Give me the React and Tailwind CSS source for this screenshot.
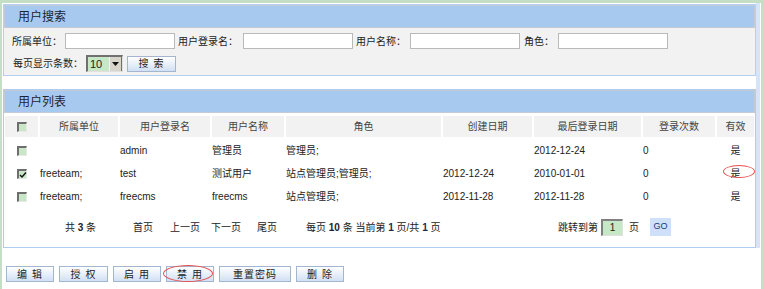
import React from 'react'

const font = { fontFamily: '"Liberation Sans", "Noto Sans CJK SC", sans-serif' }

function Checkbox({ checked }) {
  return (
    <span className="inline-block w-[10px] h-[10px] border-t-[2px] border-l-[2px] border-t-[#6e6e6e] border-l-[#6e6e6e] border-b border-r border-b-[#e8e8e8] border-r-[#e8e8e8] bg-[#c9e6c9] relative">
      {checked && (
        <svg viewBox="0 0 8 8" className="absolute left-0 top-0 w-[8px] h-[8px]">
          <path d="M1 4 L3 6 L7 1.5" fill="none" stroke="#111" strokeWidth="1.4" />
        </svg>
      )}
    </span>
  )
}

function Btn({ children, w = 'w-[48px]' }) {
  return (
    <div className={`${w} h-[16px] border border-[#a3b6d0] bg-gradient-to-b from-white to-[#d2e0f4] flex items-center justify-center text-[10px] text-[#222] tracking-[1px]`}>
      {children}
    </div>
  )
}

function PanelHeader({ title }) {
  return (
    <div className="h-[23px] border border-[#c3ccd6] bg-[#a8c9ef] flex items-center pl-[13px] text-[12px] text-[#1c2430]">
      {title}
    </div>
  )
}

const cols = 'grid grid-cols-[33px_78px_90px_72px_155px_89px_107px_72px_37px] gap-x-[2px] px-[1px]'

const rows = [
  { checked: false, unit: '', login: 'admin', name: '管理员', role: '管理员;', created: '', last: '2012-12-24', count: '0' },
  { checked: true, unit: 'freeteam;', login: 'test', name: '测试用户', role: '站点管理员;管理员;', created: '2012-12-24', last: '2010-01-01', count: '0', mark: true },
  { checked: false, unit: 'freeteam;', login: 'freecms', name: 'freecms', role: '站点管理员;', created: '2012-11-28', last: '2012-11-28', count: '0' },
]

const Input = () => <div className="w-[110px] h-[16px] border border-[#b9b9b9] bg-white" />

export default function App() {
  return (
    <div style={font} className="w-[763px] h-[289px] bg-white flex flex-col overflow-hidden text-[10px] text-[#222]">
      <div className="h-[3px] bg-[#c4dfc6] shrink-0" />
      <div className="flex flex-1">
        <div className="w-[2px] bg-[#c4dfc6]" />
        <div className="w-[759px] flex flex-col">
          <div className="flex">
            <div className="w-[754px] pl-[1px] pt-[1px]">
              {/* search panel */}
              <div className="border border-[#b3cff1] bg-[#f2f2f2]">
                <PanelHeader title="用户搜索" />
                <div className="pt-[5px] pb-[3px] pl-[8px]">
                  <div className="flex items-center h-[16px]">
                    <span className="w-[53px]">所属单位：</span>
                    <Input />
                    <span className="w-[68px] pl-[3px]">用户登录名：</span>
                    <Input />
                    <span className="w-[57px] pl-[3px]">用户名称：</span>
                    <Input />
                    <span className="w-[38px] pl-[4px]">角色：</span>
                    <Input />
                  </div>
                  <div className="flex items-center h-[17px] mt-[6px]">
                    <span className="w-[74px] pl-[1px]">每页显示条数：</span>
                    <div className="w-[37px] h-[17px] border-t-[2px] border-l-[2px] border-t-[#707070] border-l-[#707070] border-b border-r border-b-[#e0e0e0] border-r-[#e0e0e0] flex">
                      <div className="flex-1 bg-[#c6e8c6] flex items-center pl-[2px] text-[11px]">10</div>
                      <div className="w-[13px] bg-[#d8d4cc] border-l border-[#f4f4f4] border-r border-r-[#707070] flex items-center justify-center">
                        <svg viewBox="0 0 7 4" className="w-[7px] h-[4px]"><path d="M0 0 H7 L3.5 4 Z" fill="#111" /></svg>
                      </div>
                    </div>
                    <div className="ml-[4px]"><Btn w="w-[49px]">搜 索</Btn></div>
                  </div>
                </div>
              </div>

              {/* list panel */}
              <div className="mt-[13px] border border-[#aecbf0] bg-white">
                <PanelHeader title="用户列表" />
                <div className={`${cols} mt-[3px] h-[21px] text-[#444]`}>
                  <div className="bg-[#f2f2f2] flex items-center justify-center"><Checkbox /></div>
                  {['所属单位', '用户登录名', '用户名称', '角色', '创建日期', '最后登录日期', '登录次数', '有效'].map((h) => (
                    <div key={h} className="bg-[#f2f2f2] flex items-center justify-center">{h}</div>
                  ))}
                </div>
                <div className="mt-[2px]">
                  {rows.map((r, i) => (
                    <div key={i} className={`${cols} h-[23px] items-center`}>
                      <div className="flex justify-center"><Checkbox checked={r.checked} /></div>
                      <div>{r.unit}</div>
                      <div>{r.login}</div>
                      <div>{r.name}</div>
                      <div>{r.role}</div>
                      <div>{r.created}</div>
                      <div>{r.last}</div>
                      <div>{r.count}</div>
                      <div className="flex justify-center relative">
                        是
                        {r.mark && <span className="absolute left-[6px] top-[-1px] w-[32px] h-[13px] border border-[#e85050] rounded-[50%]" />}
                      </div>
                    </div>
                  ))}
                </div>
                <div className="mt-[9px] h-[20px] flex items-center pl-[61px] pb-0 mb-[10px]">
                  <span className="w-[68px]">共 <b>3</b> 条</span>
                  <span className="w-[37px]">首页</span>
                  <span className="w-[41px]">上一页</span>
                  <span className="w-[46px]">下一页</span>
                  <span className="w-[49px]">尾页</span>
                  <span className="w-[252px]">每页 <b>10</b> 条 当前第 <b className="text-[#1a2b55]">1</b> 页/共 <b className="text-[#1a2b55]">1</b> 页</span>
                  <span className="w-[43px]">跳转到第</span>
                  <div className="w-[22px] h-[17px] border-t-[2px] border-l-[2px] border-t-[#808080] border-l-[#808080] border-b border-r border-b-[#e0e0e0] border-r-[#e0e0e0] bg-[#c6e8c6] flex items-center justify-center text-[10px]">1</div>
                  <span className="ml-[6px] w-[21px]">页</span>
                  <div className="w-[21px] h-[18px] bg-[#cfe0fa] flex items-center justify-center text-[9px] text-[#1c3a7a]">GO</div>
                </div>
              </div>
            </div>
            <div className="w-[4px] bg-[#d6e4fa]" />
            <div className="w-[1px]" />
          </div>
          <div className="mt-[18px] pl-[4px] flex gap-[5px]">
            <Btn>编 辑</Btn>
            <Btn w="w-[49px]">授 权</Btn>
            <Btn>启 用</Btn>
            <div className="relative">
              <Btn>禁 用</Btn>
              <span className="absolute left-[-3px] top-[-1px] w-[50px] h-[17px] border border-[#e85050] rounded-[50%]" />
            </div>
            <Btn w="w-[72px]">重置密码</Btn>
            <Btn>删 除</Btn>
          </div>
        </div>
        <div className="w-[2px] bg-[#c4dfc6]" />
      </div>
    </div>
  )
}
